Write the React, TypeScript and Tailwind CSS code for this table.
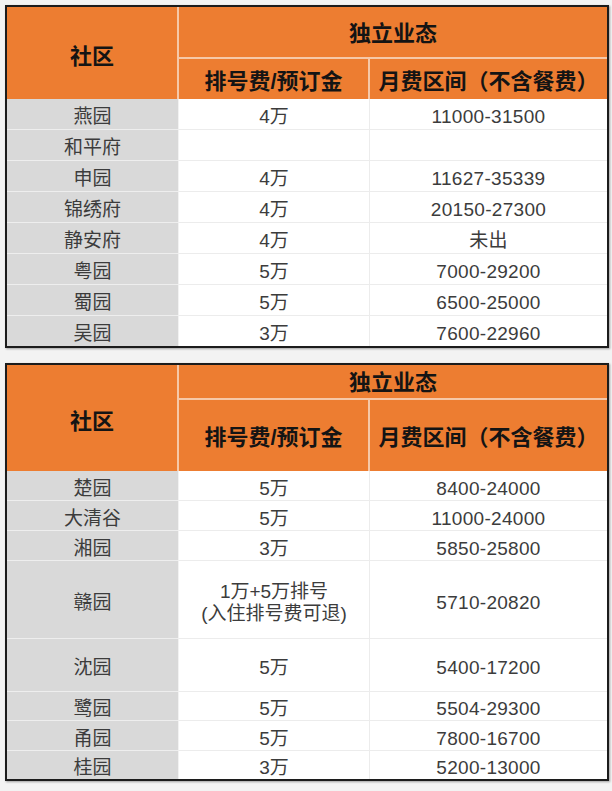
type Row = { name: string; fee: string; range: string; h: string };

const table1: Row[] = [
  { name: "燕园", fee: "4万", range: "11000-31500", h: "h-[31px]" },
  { name: "和平府", fee: "", range: "", h: "h-[31px]" },
  { name: "申园", fee: "4万", range: "11627-35339", h: "h-[31px]" },
  { name: "锦绣府", fee: "4万", range: "20150-27300", h: "h-[31px]" },
  { name: "静安府", fee: "4万", range: "未出", h: "h-[31px]" },
  { name: "粤园", fee: "5万", range: "7000-29200", h: "h-[31px]" },
  { name: "蜀园", fee: "5万", range: "6500-25000", h: "h-[31px]" },
  { name: "吴园", fee: "3万", range: "7600-22960", h: "h-[30px]" },
];

const table2: Row[] = [
  { name: "楚园", fee: "5万", range: "8400-24000", h: "h-[30px]" },
  { name: "大清谷", fee: "5万", range: "11000-24000", h: "h-[30px]" },
  { name: "湘园", fee: "3万", range: "5850-25800", h: "h-[30px]" },
  { name: "赣园", fee: "1万+5万排号\n(入住排号费可退)", range: "5710-20820", h: "h-[78px]" },
  { name: "沈园", fee: "5万", range: "5400-17200", h: "h-[53px]" },
  { name: "鹭园", fee: "5万", range: "5504-29300", h: "h-[29px]" },
  { name: "甬园", fee: "5万", range: "7800-16700", h: "h-[30px]" },
  { name: "桂园", fee: "3万", range: "5200-13000", h: "h-[28px]" },
];

function Table({ rows, top, bottom }: { rows: Row[]; top: string; bottom: string }) {
  return (
    <div className="w-[604px] border-2 border-[#1c1c1c] bg-white shadow-[1px_1px_2px_rgba(0,0,0,0.35)]">
      {/* header */}
      <div className="flex bg-[#ED7D31] text-[22px] font-bold text-[#141414]">
        <div className="flex w-[172px] items-center justify-center border-r-2 border-[#f6c8a8] pt-[6px]">
          社区
        </div>
        <div className="flex flex-1 flex-col">
          <div className={`flex items-center justify-center border-b-2 border-[#f6c8a8] pt-[2px] ${top}`}>
            独立业态
          </div>
          <div className={`flex ${bottom}`}>
            <div className="flex w-[191px] items-center justify-center border-r-2 border-[#f6c8a8] pt-[4px]">
              排号费/预订金
            </div>
            <div className="flex flex-1 items-center justify-center pt-[4px]">月费区间（不含餐费）</div>
          </div>
        </div>
      </div>
      {/* body */}
      {rows.map((r, i) => {
        const last = i === rows.length - 1;
        return (
          <div key={i} className={`flex text-[19px] leading-[22px] text-[#3c3c3c] ${r.h}`}>
            <div
              className={`flex w-[172px] items-center justify-center border-r border-[#f2f2f2] bg-[#D9D9D9] pt-[6px] ${
                last ? "" : "border-b border-b-[#eeeeee]"
              }`}
            >
              {r.name}
            </div>
            <div
              className={`flex w-[191px] items-center justify-center whitespace-pre-line border-r border-[#ececec] pt-[6px] text-center ${
                last ? "" : "border-b border-b-[#ececec]"
              }`}
            >
              {r.fee}
            </div>
            <div
              className={`flex flex-1 items-center justify-center pt-[6px] tracking-[0.3px] ${
                last ? "" : "border-b border-[#ececec]"
              }`}
            >
              {r.range}
            </div>
          </div>
        );
      })}
    </div>
  );
}

export default function App() {
  return (
    <main
      className="flex h-[791px] w-[612px] flex-col gap-[15px] bg-[#f3f3f3] pl-[5px] pt-[5px]"
      style={{ fontFamily: '"Liberation Sans", "Noto Sans CJK SC", sans-serif' }}
    >
      <Table rows={table1} top="h-[52px]" bottom="h-[40px]" />
      <Table rows={table2} top="h-[35px]" bottom="h-[71px]" />
    </main>
  );
}
